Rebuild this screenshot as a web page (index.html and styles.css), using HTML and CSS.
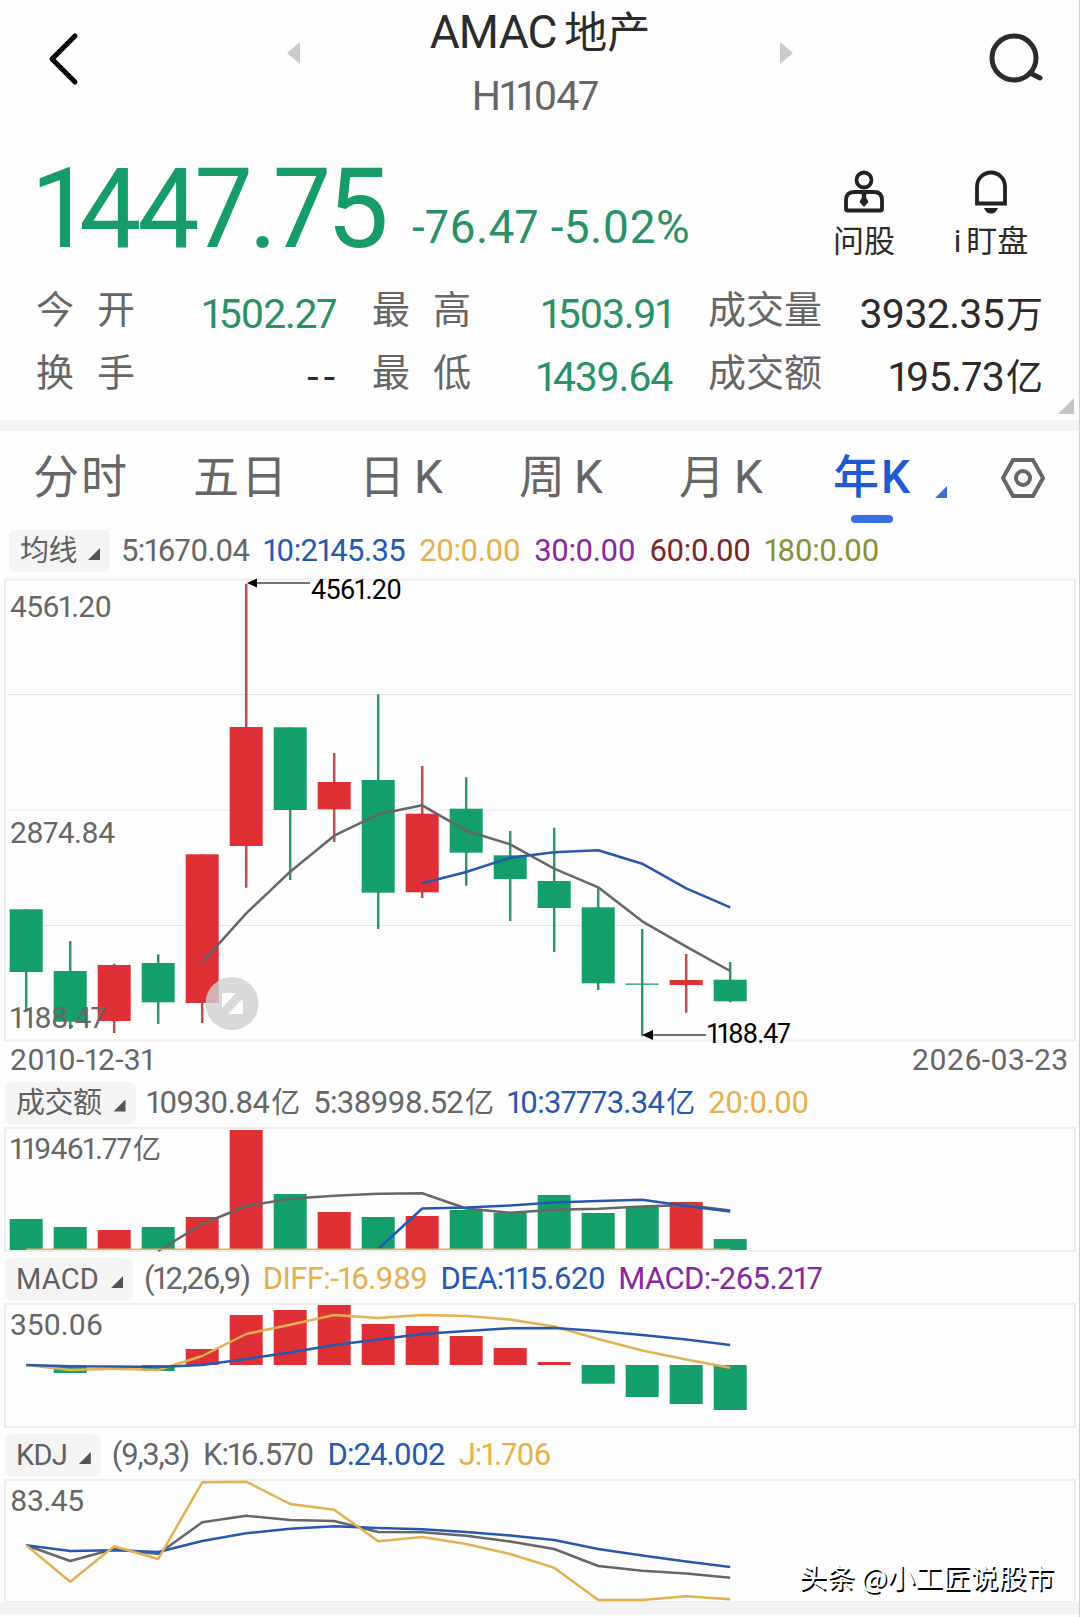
FILE: index.html
```html
<!DOCTYPE html>
<html lang="zh-CN">
<head>
    <meta charset="UTF-8">
    <meta name="viewport" content="width=device-width, initial-scale=1.0">
    <title>AMAC 地产</title>
    <link rel="stylesheet" href="styles.css">
</head>
<body>

    <header class="header">
        <svg class="back" width="32" height="54" viewBox="0 0 32 54"><path d="M28 4 L5 27 L28 50"/></svg>
        <svg class="arrow" width="13" height="22" viewBox="0 0 13 22"><path d="M13 0 L0 11 L13 22z"/></svg>
        <div class="title">
            <h1>AMAC <span>地产</span></h1>
            <p>H11047</p>
        </div>
        <svg class="arrow" width="13" height="22" viewBox="0 0 13 22"><path d="M0 0 L13 11 L0 22z"/></svg>
        <svg class="search" width="56" height="52" viewBox="0 0 56 52"><circle cx="25" cy="26" r="22"/><path d="M41 41 L51 46"/></svg>
    </header>

    <section class="quote">
        <div class="price">1447.75</div>
        <div class="change">-76.47 -5.02%</div>
        <div class="action ask">
            <svg width="44" height="46" viewBox="0 0 44 46">
                <circle cx="22" cy="12" r="7.5"/>
                <path d="M4 41 V32 Q4 24 12 24 H32 Q40 24 40 32 V41 Q40 42.500 38.500 42.500 H5.500 Q4 42.500 4 41z"/>
                <path class="solid" d="M19.500 25 H24.500 L24 29 L26.500 34 L22 39 L17.500 34 L20 29z"/>
            </svg>
            <span>问股</span>
        </div>
        <div class="action watch">
            <svg width="44" height="46" viewBox="0 0 44 46">
                <path d="M8 35.500 V18.500 A14 14 0 0 1 36 18.500 V35.500z"/>
                <path class="solid" d="M15 40 H29 Q27 45.500 22 45.500 Q17 45.500 15 40z"/>
            </svg>
            <span><i>i</i>盯盘</span>
        </div>
    </section>

    <section class="stats">
        <span class="label wide">今开</span><span class="value down">1502.27</span>
        <span class="label wide">最高</span><span class="value down">1503.91</span>
        <span class="label">成交量</span><span class="value">3932.35<i>万</i></span>
        <span class="label wide">换手</span><span class="value dash">--</span>
        <span class="label wide">最低</span><span class="value down">1439.64</span>
        <span class="label">成交额</span><span class="value">195.73<i>亿</i></span>
        <svg class="corner" width="16" height="16" viewBox="0 0 16 16"><path d="M16 0 V16 H0z"/></svg>
    </section>

    <nav class="tabs">
        <a class="tab">分时</a>
        <a class="tab">五日</a>
        <a class="tab k">日K</a>
        <a class="tab k">周K</a>
        <a class="tab k">月K</a>
        <a class="tab active">年K</a>
        <svg class="more" width="12" height="12" viewBox="0 0 12 12"><path d="M12 0 V12 H0z"/></svg>
        <svg class="settings" width="46" height="42" viewBox="0 0 46 42"><path d="M13 3 H33 L43 21 L33 39 H13 L3 21z"/><circle cx="23" cy="21" r="7"/></svg>
    </nav>

    <div class="legend ma">
        <span class="chip">均线<b></b></span>
        <span class="gray">5:1670.04</span>
        <span class="blue">10:2145.35</span>
        <span class="yellow">20:0.00</span>
        <span class="purple">30:0.00</span>
        <span class="brown">60:0.00</span>
        <span class="olive">180:0.00</span>
    </div>
    <svg class="chart" id="kline" width="1080" height="500" viewBox="0 576 1080 500"></svg>

    <div class="legend amount">
        <span class="chip">成交额<b></b></span>
        <span class="gray">10930.84<i>亿</i></span>
        <span class="gray">5:38998.52<i>亿</i></span>
        <span class="blue">10:37773.34<i>亿</i></span>
        <span class="yellow">20:0.00</span>
    </div>
    <svg class="chart" id="amount" width="1080" height="128" viewBox="0 1126 1080 128"></svg>

    <div class="legend macd">
        <span class="chip">MACD<b></b></span>
        <span class="gray params">(12,26,9)</span>
        <span class="yellow">DIFF:-16.989</span>
        <span class="blue">DEA:115.620</span>
        <span class="purple">MACD:-265.217</span>
    </div>
    <svg class="chart" id="macd" width="1080" height="128" viewBox="0 1302 1080 128"></svg>

    <div class="legend kdj">
        <span class="chip">KDJ<b></b></span>
        <span class="gray params">(9,3,3)</span>
        <span class="gray">K:16.570</span>
        <span class="blue">D:24.002</span>
        <span class="yellow">J:1.706</span>
    </div>
    <svg class="chart" id="kdj" width="1080" height="124" viewBox="0 1478 1080 124"></svg>
    <div class="footer"></div>

    <div class="watermark">头条 @小工匠说股市</div>

    <script src="charts.js"></script>
</body>
</html>
```
FILE: styles.css
```css
* {
    margin: 0;
    padding: 0;
    box-sizing: border-box;
}

body {
    position: relative;
    width: 1080px;
    height: 1617px;
    overflow: hidden;
    background-color: #fefefe;
    border-right: 1px solid #cfcfcf;
    font-family: Roboto, "Noto Sans CJK SC", sans-serif;
    font-feature-settings: "pnum";
    color: #2b2b2b;
}

i {
    font-style: normal;
    letter-spacing: 0;
}

svg {
    display: block;
    flex: none;
}

.header {
    display: flex;
    height: 130px;
    padding-left: 47px;
}

.back {
    margin-top: 32px;
    fill: none;
    stroke: #000;
    stroke-width: 5;
    stroke-linecap: round;
    stroke-linejoin: round;
}

.arrow {
    margin: 42px 0 0 208px;
    fill: #cbcbcb;
}

.title {
    width: 480px;
    text-align: center;
}

.title + .arrow {
    margin-left: 0;
}

.title h1 {
    height: 64px;
    font-size: 46px;
    font-weight: 400;
    line-height: 64px;
    letter-spacing: -0.800px;
    white-space: nowrap;
}

.title h1 span {
    font-size: 43px;
    letter-spacing: 0;
    margin-left: -3px;
}

.title p {
    padding-right: 10px;
    font-size: 41px;
    line-height: 64px;
    letter-spacing: -1.100px;
    color: #666;
}

.search {
    margin: 32px 0 0 196px;
    fill: none;
    stroke: #2b2b2b;
    stroke-width: 5;
    stroke-linecap: round;
}

.quote {
    display: flex;
    height: 148px;
    padding-left: 35px;
}

.price {
    width: 377px;
    font-size: 111px;
    line-height: 159px;
    letter-spacing: -4.200px;
    color: #159c69;
}

.change {
    width: 421px;
    font-size: 46px;
    line-height: 195px;
    letter-spacing: 0.400px;
    color: #2a9066;
}

.action {
    display: flex;
    flex-direction: column;
    align-items: center;
    width: 62px;
    padding-top: 38px;
    font-size: 31px;
    line-height: 56px;
    white-space: nowrap;
}

.action svg {
    fill: none;
    stroke: #222;
    stroke-width: 3.800;
}

.action i {
    margin-right: 5px;
}

.action .solid {
    fill: #222;
    stroke: none;
}

.watch {
    margin-left: 51px;
    width: 90px;
}

.stats {
    position: relative;
    display: grid;
    grid-template-columns: 120px 216px 120px 216px 122px 213px;
    grid-template-rows: 63px 63px;
    height: 142px;
    padding-left: 36px;
    font-size: 38px;
    white-space: nowrap;
}

.label {
    color: #666;
    line-height: 64px;
}

.label.wide {
    letter-spacing: 23px;
}

/* The first two pairs leave a gap before the next label */
.value {
    justify-self: end;
    padding-right: 36px;
    font-size: 41px;
    letter-spacing: -1.300px;
    line-height: 72px;
}

.label:not(.wide) + .value {
    padding-right: 0;
    letter-spacing: -0.700px;
}

.value i {
    margin-left: 2px;
    font-size: 37px;
}

.value.dash {
    letter-spacing: 5px;
    padding-right: 32px;
}

.down {
    color: #2a9066;
}

.corner {
    position: absolute;
    right: 5px;
    bottom: 6px;
    fill: #c6c6c6;
}

.tabs {
    display: flex;
    height: 108px;
    padding: 13px 0 0 33px;
    border-top: 11px solid #f3f3f3;
    font-size: 46px;
    line-height: 66px;
    color: #666;
}

.tab {
    width: 160px;
    height: 77px;
    letter-spacing: 2px;
}

.k {
    padding-left: 6px;
    letter-spacing: 9px;
}

.active {
    position: relative;
    width: 102px;
    font-weight: 500;
    color: #1f5bd0;
}

.active::after {
    content: "";
    position: absolute;
    left: 18px;
    bottom: -2px;
    width: 42px;
    height: 8px;
    border-radius: 4px;
    background-color: #3a70de;
}

.more {
    margin-top: 42px;
    fill: #3a6fd0;
}

.settings {
    margin: 13px 0 0 53px;
    fill: none;
    stroke: #666;
    stroke-width: 4;
}

.legend {
    display: flex;
    align-items: center;
    height: 48px;
    padding-left: 5px;
    font-size: 31px;
    line-height: 42px;
    letter-spacing: -0.600px;
    white-space: nowrap;
}

.legend i {
    margin-left: 2px;
    font-size: 29px;
}

.legend > span {
    margin-right: 14px;
}

.legend > .chip {
    display: flex;
    height: 42px;
    margin-right: 11px;
    padding: 0 10px 0 11px;
    border-radius: 6px;
    background-color: #f5f5f5;
    color: #606060;
    font-size: 29px;
    letter-spacing: -0.500px;
}

.chip b {
    width: 12px;
    height: 12px;
    margin: 18px 0 0 12px;
    background-color: #555;
    clip-path: polygon(100% 0, 100% 100%, 0 100%);
}

.legend > .params {
    letter-spacing: -1.300px;
}

.ma {
    padding-left: 9px;
    padding-bottom: 2px;
}

.ma .chip b {
    margin-left: 11px;
}

.amount {
    height: 50px;
    padding-top: 3px;
    letter-spacing: -0.700px;
}

.amount > span {
    margin-right: 13px;
}

.macd, .kdj {
    padding-top: 2px;
}

.macd > span {
    margin-right: 13px;
}

.macd .chip {
    letter-spacing: 0.200px;
}

.kdj {
    letter-spacing: -0.900px;
}

.kdj .chip {
    letter-spacing: -0.800px;
}

.gray { color: #666; }
.blue { color: #2559b0; }
.yellow { color: #e6b04c; }
.purple { color: #8628a2; }
.brown { color: #7b2727; }
.olive { color: #899036; }

.chart {
    font-size: 30px;
}

.chart text {
    fill: #666;
}

.chart .mark {
    font-size: 27px;
    fill: #000;
}

.frame {
    fill: none;
    stroke: #eeeeee;
    stroke-width: 2;
}

.grid {
    stroke: #e6e6e6;
    stroke-width: 1;
}

.pointer {
    stroke: #444;
    stroke-width: 1.500;
}

.up-fill { fill: #df3035; }
.down-fill { fill: #139e6a; }
.up-line { stroke: #c84a4d; stroke-width: 2.500; }
.down-line { stroke: #2f9570; stroke-width: 2.500; }

.line {
    fill: none;
    stroke-width: 2.500;
    stroke-linejoin: round;
}

.line.gray { stroke: #666; }
.line.blue { stroke: #2559b0; }
.line.yellow { stroke: #e3b052; }
.line.base { stroke-width: 1.500; }

.footer {
    height: 12px;
    background-color: #f3f3f3;
}

.watermark {
    position: absolute;
    right: 25px;
    bottom: 21px;
    font-family: "Noto Sans CJK SC", sans-serif;
    font-size: 27.800px;
    line-height: 40px;
    color: #fff;
    text-shadow: 1.500px 1.500px 0 #000;
    white-space: nowrap;
}
```
FILE: charts.js
```js
const STEP = 44;
const FIRST = 26.2;
const BAR = 33;

// -------------- Helpers -------------

function x(i) {
    return FIRST + STEP * i;
}

function rect(i, top, bottom, up) {
    return `<rect class="${up ? 'up' : 'down'}-fill" x="${x(i) - BAR / 2}" y="${top}" width="${BAR}" height="${bottom - top}"/>`;
}

function line(color, start, values) {
    const points = values.map((v, i) => `${x(start + i)},${v}`).join(' ');
    return `<polyline class="line ${color}" points="${points}"/>`;
}

function frame(top, bottom) {
    return `<rect class="frame" x="5" y="${top}" width="1070" height="${bottom - top}"/>`;
}

function label(left, baseline, width, text, cls = '') {
    return `<text class="${cls}" x="${left}" y="${baseline}" textLength="${width}">${text}</text>`;
}

function draw(id, parts) {
    document.getElementById(id).innerHTML = parts.join('');
}

// -------------- K line -------------

// up, body top, body bottom, high, low
const candles = [
    [0, 909.3, 972, 909.3, 1012],
    [0, 971, 1021.7, 941, 1029],
    [1, 965, 1021, 963.7, 1033],
    [0, 963, 1002.3, 954.3, 1024],
    [1, 854.3, 1003, 854.3, 1023],
    [1, 727, 846, 583.7, 887.7],
    [0, 727.3, 810, 727.3, 880],
    [1, 782, 809.3, 753, 842],
    [0, 780, 892.7, 694.3, 929],
    [1, 813.7, 892.3, 766, 898],
    [0, 808.7, 852.7, 777.3, 885.7],
    [0, 855.3, 879, 831, 921],
    [0, 881, 908, 827.7, 952],
    [0, 907.3, 983.3, 887.3, 990],
    [0, 983.5, 984.8, 929, 1035.7],
    [1, 980, 985, 954, 1012.7],
    [0, 979.7, 1001.3, 962, 1002.3]
];

draw('kline', [
    frame(579.5, 1040.5),
    ...[694.5, 810, 925.5].map(y => `<path class="grid" d="M8 ${y} H1073"/>`),
    ...candles.map(([up, top, bottom, high, low], i) =>
        `<path class="${up ? 'up' : 'down'}-line" d="M${x(i)} ${high} V${low}"/>` + rect(i, top, bottom, up)),
    line('gray', 4, [962.3, 913.3, 871.7, 835.7, 814.3, 805.3, 830.7, 844.3, 868.7, 887.3, 921.3, 946.7, 971]),
    line('blue', 9, [883.3, 872, 857.7, 852.3, 850.3, 863.7, 888.3, 907.3]),
    label(10, 617, 102, '4561.20'),
    label(10, 843, 105, '2874.84'),
    label(10, 1028, 96, '1188.47'),
    label(10, 1070, 144, '2010-12-31'),
    label(912, 1070, 156, '2026-03-23'),
    '<path class="pointer" d="M250 583 H310 M646 1035 H706"/>',
    '<path d="M247 583 L257 578.5 V587.5z M642 1035 L653 1030 V1040z"/>',
    label(311, 599, 91, '4561.20', 'mark'),
    label(707, 1043, 84, '1188.47', 'mark'),
    '<circle cx="232" cy="1003.5" r="26.5" fill="#cfcfcf" fill-opacity=".8"/>',
    '<path fill="#fff" d="M222 993 H236 L222 1008z M243 998.5 V1014 H228z"/>'
]);

// -------------- Turnover -------------

const amounts = [
    [0, 1219], [0, 1227], [1, 1230], [0, 1227], [1, 1217], [1, 1130],
    [0, 1194], [1, 1212], [0, 1217], [1, 1216], [0, 1210], [0, 1213],
    [0, 1195], [0, 1213], [0, 1206.5], [1, 1202], [0, 1239]
];

draw('amount', [
    frame(1128, 1251),
    ...amounts.map(([up, top], i) => rect(i, top, 1250, up)),
    line('gray', 3, [1251, 1224, 1206, 1198.7, 1195.7, 1193.8, 1193.3, 1208.5, 1212.7, 1209.7, 1208.7, 1206.5, 1205, 1210.5]),
    line('blue', 8, [1249, 1208.5, 1207.5, 1205.5, 1202.5, 1201, 1199.7, 1206, 1211.5]),
    line('yellow base', 0, Array(17).fill(1249.3)),
    label(10, 1159, 122, '119461.77'),
    `<text x="133" y="1159" font-size="28">亿</text>`
]);

// -------------- MACD -------------

const ZERO = 1365;
const macd = [
    1365, 1373, 1365, 1371, 1349, 1315, 1310, 1305, 1324,
    1326, 1336, 1348, 1362, 1383.7, 1397, 1404, 1410
];

draw('macd', [
    frame(1304, 1427),
    ...macd.map((v, i) => rect(i, Math.min(v, ZERO), Math.max(v, ZERO), v < ZERO)),
    line('yellow', 0, [1365, 1370, 1368.7, 1370, 1356, 1334, 1324.7, 1315, 1318, 1315, 1316, 1319.5, 1326.5, 1339, 1350.5, 1359.5, 1367.7]),
    line('blue', 0, [1365, 1366.3, 1366.5, 1367, 1365, 1359, 1352.5, 1345, 1339.5, 1334, 1331, 1328.3, 1328, 1331, 1335, 1339.5, 1345]),
    label(10, 1335, 93, '350.06')
]);

// -------------- KDJ -------------

draw('kdj', [
    frame(1480, 1602),
    line('gray', 0, [1545.3, 1561, 1549, 1554, 1522.3, 1515.7, 1520, 1521, 1532, 1532.3, 1535.7, 1541.5, 1549, 1566, 1570.7, 1573.5, 1577.7]),
    line('blue', 0, [1545.3, 1551, 1550.3, 1552, 1541, 1533.3, 1528.7, 1526.3, 1528, 1529.3, 1532, 1535.5, 1540, 1549, 1555.5, 1561.5, 1567]),
    line('yellow', 0, [1545.3, 1581.7, 1546.3, 1559, 1482.3, 1481.7, 1504, 1509.7, 1541.3, 1537, 1544, 1554, 1567.7, 1600, 1600, 1596.3, 1599.3]),
    label(10, 1511, 74, '83.45')
]);
```
